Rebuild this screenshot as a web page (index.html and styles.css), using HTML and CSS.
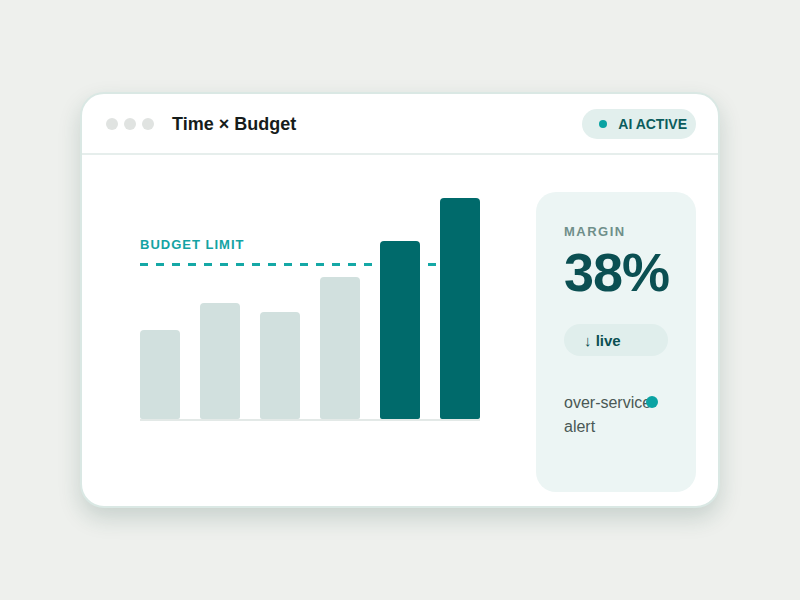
FILE: index.html
```html
<!DOCTYPE html>
<html lang="en">
<head>
    <meta charset="UTF-8">
    <meta name="viewport" content="width=device-width, initial-scale=1.0">
    <title>Time × Budget</title>
    <link rel="stylesheet" href="styles.css">
</head>
<body>

    <div class="window">
        <div class="window-bar">
            <div class="dots">
                <span class="dot"></span>
                <span class="dot"></span>
                <span class="dot"></span>
            </div>
            <h1 class="title">Time × Budget</h1>
            <div class="badge"><span class="badge-dot"></span>AI ACTIVE</div>
        </div>

        <div class="window-body">
            <div class="chart">
                <div class="limit-label">BUDGET LIMIT</div>
                <div class="limit-line"></div>
                <div class="bars">
                    <div class="bar" style="height: 89px"></div>
                    <div class="bar" style="height: 116px"></div>
                    <div class="bar" style="height: 107px"></div>
                    <div class="bar" style="height: 142px"></div>
                    <div class="bar over" style="height: 178px"></div>
                    <div class="bar over" style="height: 221px"></div>
                </div>
                <div class="axis"></div>
            </div>

            <div class="panel">
                <div class="panel-label">MARGIN</div>
                <div class="panel-value">38%</div>
                <div class="pill">↓ live</div>
                <p class="alert">over-service<br>alert</p>
                <span class="alert-dot"></span>
            </div>
        </div>
    </div>

</body>
</html>
```

FILE: styles.css
```css
body {
    font-family: "Liberation Sans", Arial, sans-serif;
    background-color: #eef0ed;
    margin: 0;
    height: 100vh;
    display: flex;
    align-items: center;
    justify-content: center;
}
.window {
    width: 636px;
    height: 412px;
    background-color: #fff;
    border: 2px solid #dae8e4;
    border-radius: 24px;
    box-shadow: 0 10px 22px rgba(30, 70, 60, 0.18);
    display: flex;
    flex-direction: column;
    overflow: hidden;
}
.window-bar {
    height: 59px;
    flex: none;
    display: flex;
    align-items: center;
    padding: 0 22px 0 24px;
    border-bottom: 2px solid #e6eeec;
}
.dots {
    display: flex;
    gap: 6px;
}
.dot {
    width: 12px;
    height: 12px;
    border-radius: 50%;
    background-color: #e0e3e1;
}
.title {
    margin: 2px 0 0 18px;
    font-size: 18px;
    font-weight: bold;
    color: #161c1b;
    flex: 1;
}
.badge {
    height: 30px;
    display: flex;
    align-items: center;
    gap: 11px;
    padding: 0 9px 0 17px;
    border-radius: 15px;
    background-color: #e2efed;
    color: #0b5c5c;
    font-size: 14px;
    font-weight: bold;
}
.badge-dot {
    width: 8px;
    height: 8px;
    border-radius: 50%;
    background-color: #0aa3a3;
}
.window-body {
    flex: 1;
    display: flex;
    padding: 37px 22px 14px 58px;
}
.chart {
    position: relative;
    width: 340px;
}
.limit-label {
    position: absolute;
    left: 0;
    top: 45px;
    font-size: 13px;
    font-weight: bold;
    letter-spacing: 1px;
    color: #14a3a3;
}
.limit-line {
    position: absolute;
    left: 0;
    top: 71px;
    width: 296px;
    height: 3px;
    background-image: linear-gradient(to right, #14a8a6 8px, transparent 8px);
    background-size: 16px 3px;
}
.bars {
    position: relative;
    height: 227px;
    display: flex;
    align-items: flex-end;
    gap: 20px;
}
.bar {
    width: 40px;
    border-radius: 4px 4px 2px 2px;
    background-color: #d1e0de;
}
.bar.over {
    background-color: #006a6b;
}
.axis {
    height: 2px;
    background-color: #e3e9e7;
}
.panel {
    position: relative;
    margin-left: auto;
    width: 160px;
    box-sizing: border-box;
    padding: 32px 28px;
    border-radius: 20px;
    background-color: #ecf5f4;
}
.panel-label {
    font-size: 13px;
    font-weight: bold;
    letter-spacing: 1.5px;
    color: #6f8f8a;
}
.panel-value {
    margin-top: 5px;
    font-size: 54px;
    font-weight: bold;
    letter-spacing: -1px;
    line-height: 56px;
    color: #0b4f52;
}
.pill {
    margin-top: 24px;
    width: 104px;
    height: 32px;
    box-sizing: border-box;
    padding-left: 20px;
    display: flex;
    align-items: center;
    border-radius: 16px;
    background-color: #e0eeec;
    color: #0b4f52;
    font-size: 15px;
    font-weight: bold;
}
.alert {
    margin: 35px 0 0;
    font-size: 16px;
    line-height: 24px;
    color: #4a5855;
}
.alert-dot {
    position: absolute;
    left: 110px;
    top: 204px;
    width: 12px;
    height: 12px;
    border-radius: 50%;
    background-color: #0aa3a3;
}
```
